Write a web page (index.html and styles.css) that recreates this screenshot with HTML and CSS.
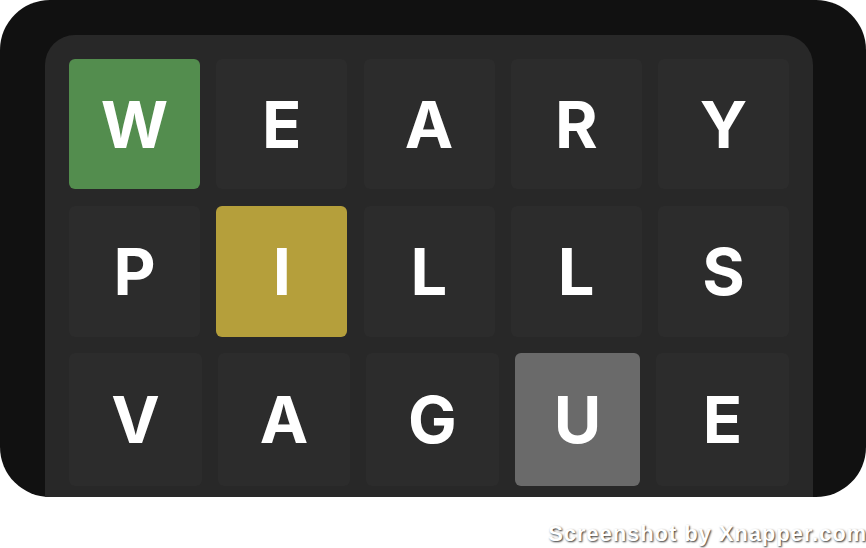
FILE: index.html
```html
<!DOCTYPE html>
<html>
<head>
<meta charset="utf-8">
<link rel="stylesheet" href="styles.css">
</head>
<body>
<div class="frame">
  <div class="panel">
    <div class="row">
      <div class="tile correct">W</div>
      <div class="tile">E</div>
      <div class="tile">A</div>
      <div class="tile">R</div>
      <div class="tile">Y</div>
    </div>
    <div class="row">
      <div class="tile">P</div>
      <div class="tile present">I</div>
      <div class="tile">L</div>
      <div class="tile">L</div>
      <div class="tile">S</div>
    </div>
    <div class="row row-last">
      <div class="tile t1">V</div>
      <div class="tile t2">A</div>
      <div class="tile t3">G</div>
      <div class="tile t4 absent">U</div>
      <div class="tile t5">E</div>
    </div>
  </div>
</div>
<div class="watermark">Screenshot by Xnapper.com</div>
</body>
</html>
```
FILE: styles.css
```css
html, body {
  margin: 0;
  padding: 0;
  background: #ffffff;
  width: 866px;
  height: 548px;
  overflow: hidden;
}
.frame {
  width: 866px;
  height: 497px;
  background: #111111;
  border-radius: 50px;
  box-sizing: border-box;
  padding: 35px 53px 0 45px;
  overflow: hidden;
}
.panel {
  height: 462px;
  background: #282828;
  border-radius: 30px 30px 0 0;
  padding: 24px 0 0 24px;
  box-sizing: border-box;
  display: flex;
  flex-direction: column;
  gap: 17px;
}
.row {
  display: grid;
  grid-template-columns: repeat(5, 131px);
  column-gap: 16.25px;
  height: 130px;
}
.row + .row {
  height: 131px;
}
.row.row-last {
  display: flex;
  gap: 16px;
  height: 133px;
  margin-top: -1px;
}
.tile {
  background: #2c2c2c;
  border-radius: 6px;
  display: flex;
  align-items: center;
  justify-content: center;
  color: #ffffff;
  font-family: "Inter", "Liberation Sans", sans-serif;
  font-weight: 700;
  font-size: 65px;
  line-height: 1;
}
.t1 { width: 133px; }
.t2 { width: 132px; }
.t3 { width: 133px; }
.t4 { width: 125px; }
.t5 { width: 133px; }
.correct { background: #538d4e; }
.present { background: #b59f3b; }
.absent { background: #6a6a6a; }
.watermark {
  text-align: right;
  margin-top: 24px;
  margin-right: -1px;
  font-family: "Liberation Sans", Arial, sans-serif;
  font-weight: 700;
  font-size: 22px;
  letter-spacing: 0.92px;
  line-height: 26px;
  color: #ffffff;
  text-shadow: 1px 1px 2px rgba(0,0,0,0.8);
  white-space: nowrap;
}
```
